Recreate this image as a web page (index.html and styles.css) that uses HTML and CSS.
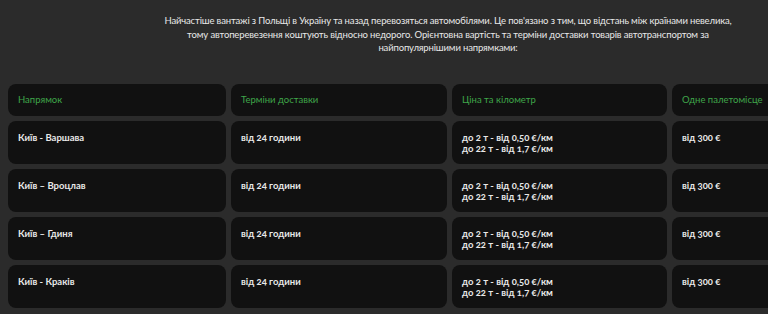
FILE: index.html
```html
<!DOCTYPE html>
<html lang="uk">
<head>
    <meta charset="UTF-8">
    <meta name="viewport" content="width=device-width, initial-scale=1.0">
    <title>Вантажі з Польщі</title>
    <link rel="stylesheet" href="styles.css">
</head>
<body>

    <div class="routes">
        <p class="intro">Найчастіше вантажі з Польщі в Україну та назад перевозяться автомобілями. Це пов'язано з тим, що відстань між країнами невелика, тому автоперевезення коштують відносно недорого. Орієнтовна вартість та терміни доставки товарів автотранспортом за найпопулярнішими напрямками:</p>

        <div class="price-table">
            <div class="cell head">Напрямок</div>
            <div class="cell head">Терміни доставки</div>
            <div class="cell head">Ціна та кілометр</div>
            <div class="cell head">Одне палетомісце</div>

            <div class="cell">Київ - Варшава</div>
            <div class="cell">від 24 години</div>
            <div class="cell">до 2 т - від 0,50 €/км<br>до 22 т - від 1,7 €/км</div>
            <div class="cell">від 300 €</div>

            <div class="cell">Київ – Вроцлав</div>
            <div class="cell">від 24 години</div>
            <div class="cell">до 2 т - від 0,50 €/км<br>до 22 т - від 1,7 €/км</div>
            <div class="cell">від 300 €</div>

            <div class="cell">Київ – Гдиня</div>
            <div class="cell">від 24 години</div>
            <div class="cell">до 2 т - від 0,50 €/км<br>до 22 т - від 1,7 €/км</div>
            <div class="cell">від 300 €</div>

            <div class="cell">Київ - Краків</div>
            <div class="cell">від 24 години</div>
            <div class="cell">до 2 т - від 0,50 €/км<br>до 22 т - від 1,7 €/км</div>
            <div class="cell">від 300 €</div>
        </div>
    </div>

</body>
</html>
```

FILE: styles.css
```css
body {
    margin: 0;
    padding: 14px 8px 8px;
    background-color: #2b2b2b;
    color: #e8e8e8;
    font-family: 'Lato', 'Open Sans', sans-serif;
    font-size: 9.5px;
}

.routes {
    width: max-content;
}

.intro {
    margin: 0 auto;
    width: 576px;
    text-align: center;
    font-size: 9.5px;
    letter-spacing: -0.15px;
    line-height: 13.5px;
}

.price-table {
    margin-top: 29px;
    display: grid;
    grid-template-columns: 218px 216px 215px 216px;
    grid-template-rows: 32px repeat(4, 43px);
    gap: 5px;
}

.cell {
    background-color: #111111;
    border-radius: 8px;
    padding: 11px 10px 0;
    line-height: 11px;
    font-weight: 700;
    font-variant-numeric: oldstyle-nums;
}

.cell.head {
    display: flex;
    align-items: center;
    padding-top: 0;
    color: #3fa64a;
    font-weight: 400;
}
```
